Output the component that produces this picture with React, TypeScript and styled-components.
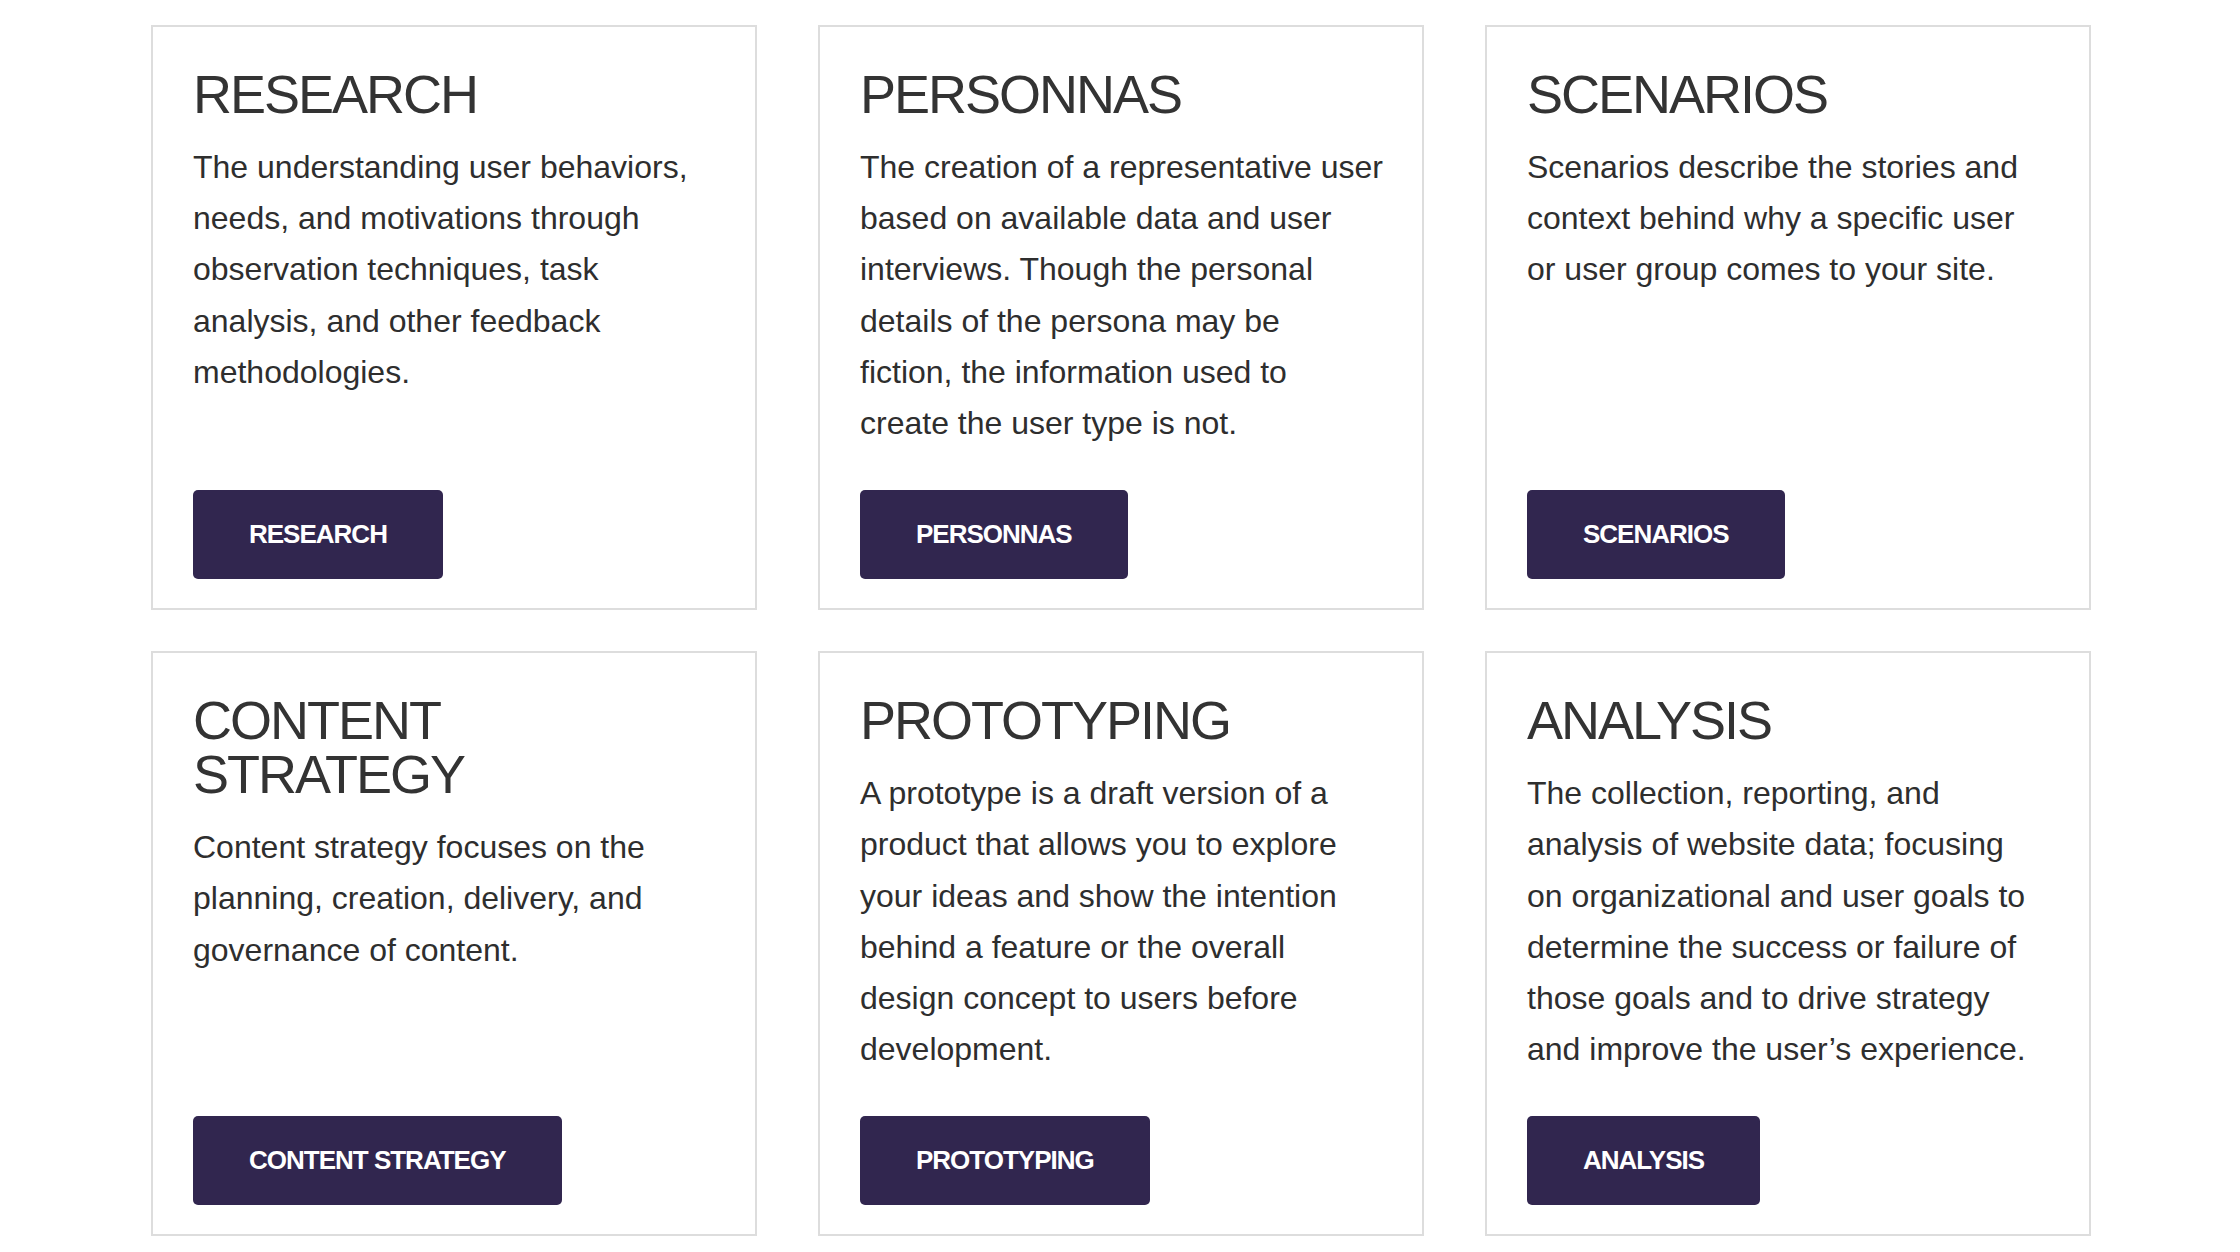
import React from "react";
import styled, { createGlobalStyle } from "styled-components";

const GlobalStyle = createGlobalStyle`
  html, body {
    margin: 0;
    padding: 0;
    background: #ffffff;
  }
  body {
    font-family: "Liberation Sans", Arial, Helvetica, sans-serif;
    color: #333333;
  }
  * { box-sizing: border-box; }
`;

const Page = styled.main`
  padding: 25px 0 14px 151px;
`;

const Grid = styled.div`
  display: grid;
  width: 1940px;
  grid-template-columns: repeat(3, 1fr);
  column-gap: 61px;
  row-gap: 41px;
`;

const Card = styled.section`
  display: flex;
  flex-direction: column;
  align-items: flex-start;
  border: 2px solid #dddddd;
  background: #ffffff;
  padding: 40px 30px 29px 40px;
`;

const Title = styled.h2`
  margin: 0;
  font-family: "Liberation Sans", Arial, Helvetica, sans-serif;
  font-weight: 400;
  font-size: 54px;
  line-height: 54px;
  letter-spacing: -2px;
  color: #333333;
`;

const Text = styled.p`
  margin: 21px 0 41px;
  font-size: 32px;
  line-height: 51.2px;
  color: #2e2e2e;
  white-space: nowrap;
`;

const Button = styled.a`
  margin-top: auto;
  display: inline-flex;
  align-items: center;
  justify-content: center;
  height: 89px;
  padding: 0 56px;
  background: #31264f;
  color: #ffffff;
  border-radius: 5px;
  font-family: "Liberation Sans", Arial, Helvetica, sans-serif;
  font-weight: 700;
  font-size: 26px;
  letter-spacing: -1px;
  text-decoration: none;
  text-transform: uppercase;
  cursor: pointer;
`;

type Item = { title: string[]; lines: string[]; label: string };

const items: Item[] = [
  {
    title: ["RESEARCH"],
    lines: [
      "The understanding user behaviors,",
      "needs, and motivations through",
      "observation techniques, task",
      "analysis, and other feedback",
      "methodologies.",
    ],
    label: "RESEARCH",
  },
  {
    title: ["PERSONNAS"],
    lines: [
      "The creation of a representative user",
      "based on available data and user",
      "interviews. Though the personal",
      "details of the persona may be",
      "fiction, the information used to",
      "create the user type is not.",
    ],
    label: "PERSONNAS",
  },
  {
    title: ["SCENARIOS"],
    lines: [
      "Scenarios describe the stories and",
      "context behind why a specific user",
      "or user group comes to your site.",
    ],
    label: "SCENARIOS",
  },
  {
    title: ["CONTENT", "STRATEGY"],
    lines: [
      "Content strategy focuses on the",
      "planning, creation, delivery, and",
      "governance of content.",
    ],
    label: "CONTENT STRATEGY",
  },
  {
    title: ["PROTOTYPING"],
    lines: [
      "A prototype is a draft version of a",
      "product that allows you to explore",
      "your ideas and show the intention",
      "behind a feature or the overall",
      "design concept to users before",
      "development.",
    ],
    label: "PROTOTYPING",
  },
  {
    title: ["ANALYSIS"],
    lines: [
      "The collection, reporting, and",
      "analysis of website data; focusing",
      "on organizational and user goals to",
      "determine the success or failure of",
      "those goals and to drive strategy",
      "and improve the user\u2019s experience.",
    ],
    label: "ANALYSIS",
  },
];

const withBreaks = (parts: string[]) =>
  parts.map((p, i) => (
    <React.Fragment key={i}>
      {i > 0 && <br />}
      {p}
    </React.Fragment>
  ));

export default function App() {
  return (
    <>
      <GlobalStyle />
      <Page>
        <Grid>
          {items.map((it) => (
            <Card key={it.label}>
              <Title>{withBreaks(it.title)}</Title>
              <Text>{withBreaks(it.lines)}</Text>
              <Button href="#">{it.label}</Button>
            </Card>
          ))}
        </Grid>
      </Page>
    </>
  );
}
